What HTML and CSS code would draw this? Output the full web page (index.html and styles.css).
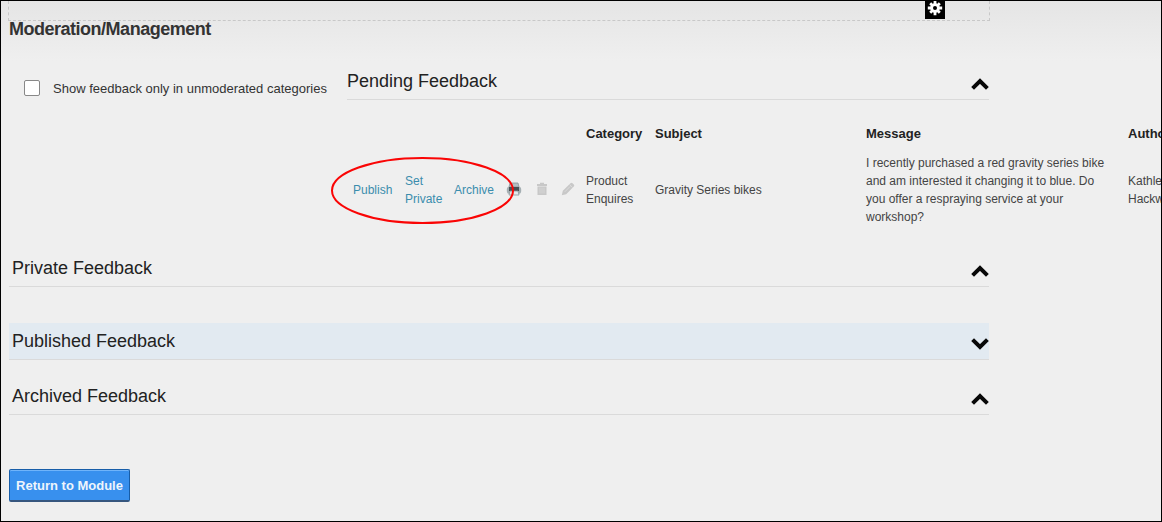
FILE: index.html
```
<!DOCTYPE html>
<html lang="en">
<head>
<meta charset="utf-8">
<title>Moderation/Management</title>
<link rel="stylesheet" href="styles.css">
</head>
<body>
<main class="page">
  <div class="zone">
    <span class="zone-tool">
      <svg width="16" height="16" viewBox="0 0 16 16"><g stroke="#fff" stroke-width="2.800"><path d="M8 .8v14.400M.8 8h14.400M3.200 3.200l9.600 9.600M12.800 3.200L3.200 12.800"/></g><circle cx="8" cy="8" r="4.800" fill="#fff"/><circle cx="8" cy="8" r="2" fill="#000"/></svg>
    </span>
  </div>
  <h1 class="title"><span>Moderation/Management</span></h1>

  <div class="top">
    <label class="filter"><input type="checkbox" class="check"><span class="filter-text">Show feedback only in unmoderated categories</span></label>
    <section class="pending">
      <h2 class="bar bar-pending"><span>Pending Feedback</span><svg class="chev" width="18" height="12" viewBox="0 0 18 12"><path d="M1.600 10.300L9 3l7.400 7.300"/></svg></h2>
      <div class="grid">
        <div class="row head">
          <b class="category">Category</b><b class="subject">Subject</b><b class="message">Message</b><b class="author">Author</b>
        </div>
        <div class="row">
          <div class="actions">
            <a class="publish">Publish</a><a class="private">Set<br>Private</a><a class="archive">Archive</a>
            <svg class="icon printer" width="16" height="14" viewBox="0 0 16 14"><path d="M4 1h8l1 4H3z" fill="#b4bec2" stroke="#899398" stroke-width=".8"/><rect x=".8" y="4.500" width="14.400" height="7.500" rx="3" fill="#a5afb3"/><path d="M3 5h10v4H3z" fill="#485054"/><path d="M4 9h8l1 4H3z" fill="#e3e9eb" stroke="#8c969a" stroke-width=".8"/></svg>
            <svg class="icon bin" width="12" height="14" viewBox="0 0 12 14"><path d="M4 2V.8h4V2h3v2H1V2zM1.500 4.500h9V13h-9z" fill="#c8c8c8"/><path d="M4 5.500v6M6 5.500v6M8 5.500v6" stroke="#dcdcdc" stroke-width=".7"/></svg>
            <svg class="icon pencil" width="14" height="14" viewBox="0 0 14 14"><path d="M.8 13.200l1-4.400L9.500 1.200q1-1 2 0l1.300 1.300q1 1 0 2L5.200 12.200z" fill="#c8c8c8"/><path d="M3.800 9.800l5.400-5.400M8.500 2.500l3 3" stroke="#e2e2e2" stroke-width=".7"/></svg>
            <svg class="ring" width="186" height="70" viewBox="0 0 186 70"><ellipse cx="92.500" cy="35.500" rx="90.500" ry="32.500" fill="none" stroke="#fa0505" stroke-width="2"/></svg>
          </div>
          <div class="category">Product<br>Enquires</div>
          <div class="subject">Gravity Series bikes</div>
          <div class="message">I recently purchased a red gravity series bike<br>and am interested it changing it to blue. Do<br>you offer a respraying service at your<br>workshop?</div>
          <div class="author">Kathleen<br>Hackwood</div>
        </div>
      </div>
    </section>
  </div>

  <h2 class="bar"><span>Private Feedback</span><svg class="chev" width="18" height="12" viewBox="0 0 18 12"><path d="M1.600 10.300L9 3l7.400 7.300"/></svg></h2>
  <h2 class="bar published"><span>Published Feedback</span><svg class="chev" width="18" height="12" viewBox="0 0 18 12"><path d="M1.600 1.700L9 9l7.400-7.300"/></svg></h2>
  <h2 class="bar archived"><span>Archived Feedback</span><svg class="chev" width="18" height="12" viewBox="0 0 18 12"><path d="M1.600 10.300L9 3l7.400 7.300"/></svg></h2>
  <button class="return">Return to Module</button>
</main>
</body>
</html>
```
FILE: styles.css
```
* { box-sizing: border-box; }
body { margin: 0; font-family: "Liberation Sans", Arial, sans-serif; color: #444; }
.page { width: 1162px; height: 522px; border: 1px solid #000; padding-left: 8px; overflow: hidden; background: linear-gradient(#e5e5e5, #efefef 60px); }
.zone { position: relative; width: 982px; height: 20px; margin-left: -1px; border: 1px dashed #c8c8c8; border-top: 0; }
.zone-tool { position: absolute; left: 916px; top: 0; width: 20px; height: 18px; background: #000; }
.zone-tool svg { display: block; margin: -1px 0 0 2px; }
.title { margin: 0; height: 42px; font-size: 18px; line-height: 17px; color: #333; letter-spacing: -.49px; }
.top { display: flex; height: 187px; }
.filter { display: flex; flex: none; width: 338px; padding: 17px 0 0 15px; height: 40px; align-items: flex-start; font-size: 13px; line-height: 18px; color: #333; }
.check { appearance: none; width: 16px; height: 16px; margin: 0; border: 1px solid #888; border-radius: 2px; background: #fff; }
.filter-text { margin-left: 13px; white-space: nowrap; }
.pending { flex: none; width: 815px; }
.bar { display: flex; justify-content: space-between; width: 980px; height: 37px; margin: 0; padding: 0 0 0 3px; border-bottom: 1px solid #dadada; font-size: 18px; font-weight: normal; line-height: 36px; color: #222; }
.bar-pending { width: 642px; padding-left: 0; }
.published { margin-top: 36px; background: #e2eaf1; }
.archived { margin-top: 18px; }
.chev { margin-top: 15px; fill: none; stroke: #080808; stroke-width: 4; }
.grid { padding-top: 25px; font-size: 12px; line-height: 18px; }
.row { display: grid; grid-template-columns: 239px 69px 211px 262px 100px; align-items: center; white-space: nowrap; }
.head { margin-bottom: 11px; font-size: 13px; color: #222; }
.category { grid-column: 2; }
.subject { grid-column: 3; }
.message { grid-column: 4; }
.author { grid-column: 5; }
.actions { position: relative; display: flex; align-items: center; height: 72px; padding-left: 6px; color: #3b8dad; }
.publish { width: 52px; }
.private { width: 49px; }
.archive { width: 52px; }
.icon { flex: none; margin-top: -3px; }
.bin { margin-left: 14px; }
.pencil { margin-left: 13px; }
.ring { position: absolute; left: -17px; top: 1px; }
.return { display: block; width: 121px; height: 33px; margin-top: 54px; padding: 1px 0 0; border: 1px solid #175da8; border-bottom: 2px solid #36567e; border-radius: 2px; box-shadow: inset 0 1px #70b4fa; background: #3890ee; color: #eef5fc; font: bold 13px/29px "Liberation Sans", Arial, sans-serif; white-space: nowrap; }
```
